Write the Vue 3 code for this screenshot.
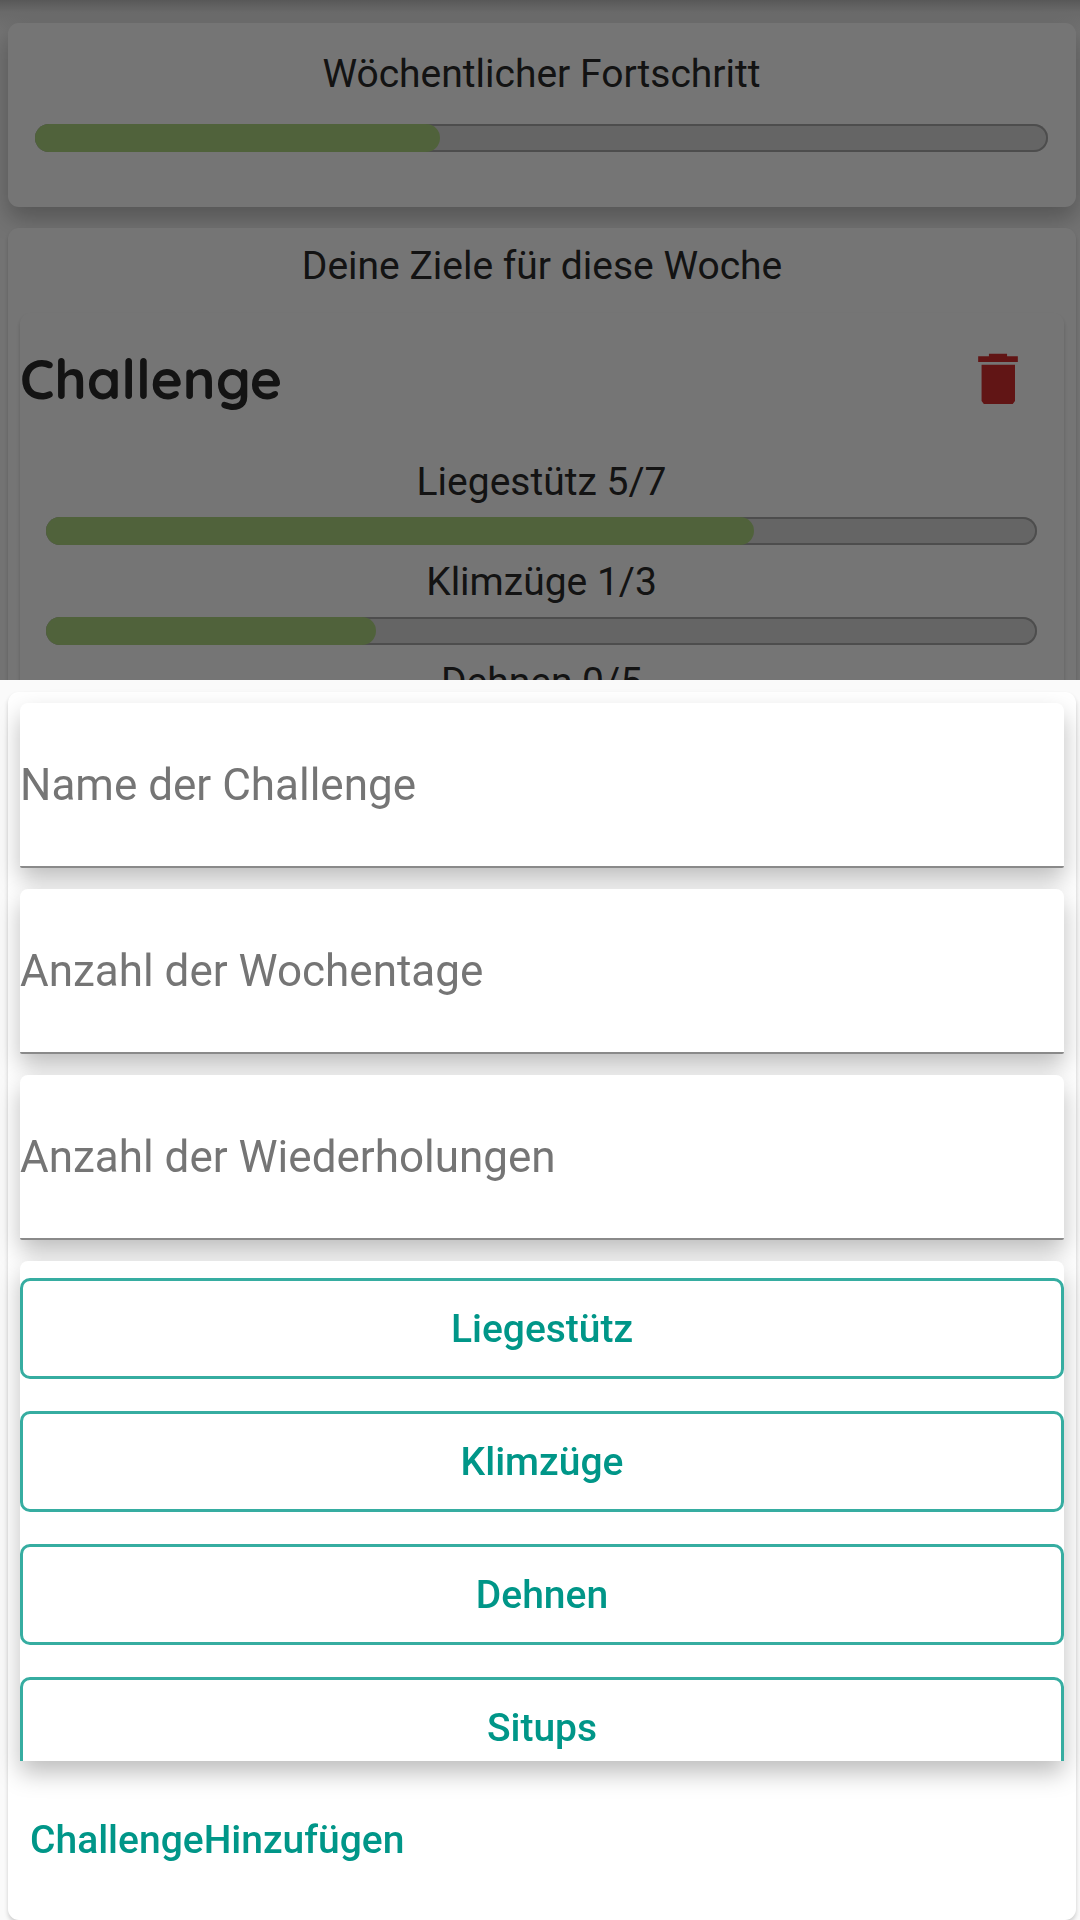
<script setup>
import { ref } from 'vue'

const weekly = 40

const goals = [
  { name: 'Liegestütz', done: 5, total: 7 },
  { name: 'Klimzüge', done: 1, total: 3 },
  { name: 'Dehnen', done: 0, total: 5 },
]

const fields = ref([
  { id: 'name', label: 'Name der Challenge', type: 'text', value: '' },
  { id: 'days', label: 'Anzahl der Wochentage', type: 'text', value: '' },
  { id: 'reps', label: 'Anzahl der Wiederholungen', type: 'text', value: '' },
])

const exercises = ['Liegestütz', 'Klimzüge', 'Dehnen', 'Situps']
</script>

<template>
  <div class="app">
    <main class="page">
      <section class="card raised weekly">
        <h2 class="title">Wöchentlicher Fortschritt</h2>
        <div class="track" role="progressbar" aria-label="Wöchentlicher Fortschritt" :aria-valuenow="weekly">
          <div class="fill" :style="{ width: weekly + '%' }"></div>
        </div>
      </section>

      <section class="card goals">
        <h2 class="title">Deine Ziele für diese Woche</h2>
        <article class="card challenge">
          <header class="challenge-head">
            <h3 class="challenge-name">Challenge</h3>
            <button class="delete" type="button" aria-label="Challenge löschen">
              <svg viewBox="0 0 24 24" aria-hidden="true">
                <path d="M6.200 7H18v12.800L17.200 20.800H7L6.200 19.800zM19 4h-3.800v-.9H8.800V4H5v2h14V4z" />
              </svg>
            </button>
          </header>
          <ul class="goal-list">
            <li v-for="goal in goals" :key="goal.name" class="goal">
              <span class="goal-name">{{ goal.name }} {{ goal.done }}/{{ goal.total }}</span>
              <div class="track" role="progressbar" :aria-label="goal.name" :aria-valuenow="goal.done" :aria-valuemax="goal.total">
                <div class="fill" :style="{ width: (goal.done / goal.total) * 100 + '%' }"></div>
              </div>
            </li>
          </ul>
        </article>
      </section>
    </main>

    <div class="scrim"></div>

    <div class="sheet" role="dialog" aria-label="Challenge hinzufügen">
      <form class="card form" @submit.prevent>
        <input
          v-for="field in fields"
          :id="field.id"
          :key="field.id"
          v-model="field.value"
          class="field raised"
          :type="field.type"
          :placeholder="field.label"
          :aria-label="field.label"
        />
        <div class="exercises raised">
          <button v-for="exercise in exercises" :key="exercise" class="exercise" type="button">
            {{ exercise }}
          </button>
        </div>
        <button class="submit" type="submit">ChallengeHinzufügen</button>
      </form>
    </div>
  </div>
</template>

<style>
body {
  margin: 0;
  background: #fafafa;
}
</style>

<style scoped>
.app {
  height: 100vh;
  overflow: hidden;
  font-family: Roboto, "Liberation Sans", sans-serif;
  font-size: 39px;
  line-height: 44px;
  color: #2a2a2a;
}

.page {
  display: flex;
  flex-direction: column;
  gap: 21px;
  padding: 23px 4px 0 8px;
  background: linear-gradient(#c0c0c0, #e6e6e6 12px, #fafafa 32px);
}

.card {
  position: relative;
  background: #fff;
  border-radius: 11px;
  box-shadow: 0 3px 4px rgba(0, 0, 0, 0.18);
}

.raised {
  position: relative;
  box-shadow: 0 12px 24px rgba(0, 0, 0, 0.26);
}

.title {
  margin: 0;
  font-size: 39px;
  font-weight: 400;
  text-align: center;
}

.weekly {
  padding: 29px 28px 55px 27px;
}

.weekly .title {
  margin-bottom: 28px;
}

.track {
  height: 28px;
  border-radius: 14px;
  background: #dcdcdc;
  box-shadow: inset 0 0 0 2px #a8a8a8;
}

.fill {
  height: 100%;
  border-radius: 14px;
  background: #aed581;
}

.goals {
  padding: 16px 12px 12px;
}

.goals > .title {
  padding-bottom: 25px;
}

.challenge {
  padding-bottom: 24px;
}

.challenge-head {
  display: flex;
  align-items: center;
  justify-content: space-between;
  height: 132px;
  padding-right: 32px;
}

.challenge-name {
  margin: 0;
  font-family: Quicksand, Inter, sans-serif;
  font-feature-settings: "cv11";
  font-size: 55px;
  font-weight: 700;
  line-height: 64px;
}

.delete {
  display: flex;
  padding: 0;
  border: 0;
  background: none;
}

.delete svg {
  width: 68px;
  height: 68px;
  fill: #d32f2f;
}

.goal-list {
  display: flex;
  flex-direction: column;
  gap: 15px;
  margin: 0;
  padding: 15px 27px 0 26px;
  list-style: none;
}

.goal {
  display: flex;
  flex-direction: column;
  gap: 13px;
}

.goal-name {
  text-align: center;
}

.scrim {
  position: fixed;
  inset: 0;
  background: rgba(0, 0, 0, 0.54);
}

.sheet {
  position: fixed;
  right: 0;
  bottom: 0;
  left: 0;
  padding: 12px 4px 0 8px;
  background: #fafafa;
}

.form {
  display: flex;
  flex-direction: column;
  gap: 21px;
  padding: 11px 12px 30px;
}

.field {
  box-sizing: border-box;
  width: 100%;
  height: 165px;
  padding: 0;
  border: 0;
  border-bottom: 2px solid #8a8a8a;
  border-radius: 8px 8px 2px 2px;
  outline: 0;
  background: #fff;
  font: inherit;
  font-size: 44px;
  color: #212121;
}

.field::placeholder {
  color: #757575;
  opacity: 1;
}

.exercises {
  display: flex;
  flex-direction: column;
  gap: 32px;
  box-sizing: border-box;
  height: 500px;
  padding-top: 17px;
  overflow: hidden;
  border-radius: 8px 8px 0 0;
  background: #fff;
}

.exercise {
  flex: none;
  height: 101px;
  padding: 0;
  border: 3px solid #36ada1;
  border-radius: 10px;
  background: #fff;
  font: inherit;
  font-weight: 500;
  color: #009688;
}

.submit {
  align-self: flex-start;
  height: 100px;
  margin-top: 8px;
  padding: 0 10px;
  border: 0;
  background: none;
  font: inherit;
  font-weight: 500;
  color: #009688;
}
</style>
